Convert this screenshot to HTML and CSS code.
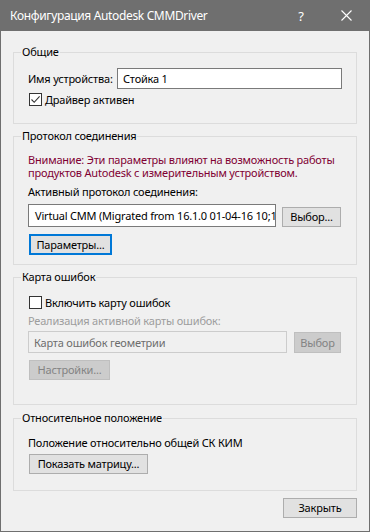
FILE: index.html
```html
<!DOCTYPE html>
<html lang="ru">
<head>
    <meta charset="UTF-8">
    <title>Конфигурация Autodesk CMMDriver</title>
    <link rel="stylesheet" href="styles.css">
</head>
<body>
    <div class="window">
        <div class="titlebar">
            <span class="title">Конфигурация Autodesk CMMDriver</span>
            <span class="help">?</span>
            <span class="close">
                <svg width="11" height="11" viewBox="0 0 11 11"><path d="M0.5 0.5 L10.5 10.5 M10.5 0.5 L0.5 10.5" stroke="#fff" stroke-width="1.1" fill="none"/></svg>
            </span>
        </div>

        <div class="dialog">
            <fieldset class="group group-general">
                <legend>Общие</legend>
                <div class="name-row">
                    <label for="device-name">Имя устройства:</label>
                    <input type="text" id="device-name" class="field name-field" value="Стойка 1">
                </div>
                <div class="check">
                    <span class="box">
                        <svg width="11" height="11" viewBox="0 0 11 11"><path d="M1.5 5.5 L4.2 8.3 L9.6 2.4" stroke="#333" stroke-width="1.1" fill="none"/></svg>
                    </span>
                    Драйвер активен
                </div>
            </fieldset>

            <fieldset class="group group-protocol">
                <legend>Протокол соединения</legend>
                <p class="warning">Внимание: Эти параметры влияют на возможность работы продуктов Autodesk с измерительным устройством.</p>
                <p class="caption">Активный протокол соединения:</p>
                <div class="pick-row">
                    <div class="field protocol-field">Virtual CMM (Migrated from 16.1.0 01-04-16 10;11</div>
                    <button class="btn pick-btn">Выбор...</button>
                </div>
                <button class="btn focused params-btn">Параметры...</button>
            </fieldset>

            <fieldset class="group group-errors">
                <legend>Карта ошибок</legend>
                <div class="check">
                    <span class="box"></span>
                    Включить карту ошибок
                </div>
                <p class="caption disabled-text">Реализация активной карты ошибок:</p>
                <div class="pick-row errors-row">
                    <div class="field disabled-field">Карта ошибок геометрии</div>
                    <button class="btn disabled small-pick">Выбор</button>
                </div>
                <button class="btn disabled settings-btn">Настройки...</button>
            </fieldset>

            <fieldset class="group group-position">
                <legend>Относительное положение</legend>
                <p class="caption">Положение относительно общей СК КИМ</p>
                <button class="btn matrix-btn">Показать матрицу...</button>
            </fieldset>

            <div class="footer">
                <button class="btn close-btn">Закрыть</button>
            </div>
        </div>
    </div>
</body>
</html>
```

FILE: styles.css
```css
:root {
    --dialog-bg: #f0f0f0;
    --frame: #6f6f6f;
    --group-line: #dcdcdc;
    --btn-bg: #e1e1e1;
    --btn-border: #adadad;
    --focus: #0078d7;
    --warning: #800033;
}

* {
    margin: 0;
    padding: 0;
    box-sizing: border-box;
}

body {
    font-family: "Noto Sans", "Open Sans", sans-serif;
    font-size: 11px;
    letter-spacing: -0.2px;
    color: #000;
    background: #fff;
}

.window {
    width: 370px;
    height: 532px;
    border: 1px solid var(--frame);
    border-top: none;
    background: var(--dialog-bg);
    display: flex;
    flex-direction: column;
}

.titlebar {
    height: 31px;
    background: var(--frame);
    color: #fff;
    display: flex;
    align-items: center;
    font-size: 12px;
    letter-spacing: -0.35px;
    padding-left: 9px;
}

.title {
    flex: 1;
}

.help {
    width: 14px;
    text-align: center;
    font-size: 13px;
    margin-right: 33px;
}

.close {
    display: flex;
    width: 11px;
    margin-right: 17px;
}

.dialog {
    padding: 13px 12px 0;
    display: flex;
    flex-direction: column;
}

.group {
    border: 1px solid var(--group-line);
    padding: 8px 14px 0;
    display: flex;
    flex-direction: column;
    align-items: flex-start;
}

.group legend {
    line-height: 16px;
    padding: 0 1px;
    margin-left: -7px;
}

.group-general { padding-bottom: 15px; }
.group-protocol { margin-top: 4px; padding-top: 9px; padding-bottom: 9px; }
.group-errors { margin-top: 4px; padding-top: 9px; padding-bottom: 24px; }
.group-position { margin-top: 5px; padding-top: 10px; padding-bottom: 16px; }

.name-row {
    display: flex;
    align-items: center;
    width: 100%;
    justify-content: space-between;
}

.field {
    font: inherit;
    letter-spacing: inherit;
    color: #000;
    background: #fff;
    border: 1px solid #7a7a7a;
    padding: 0 5px;
    height: 21px;
    display: flex;
    align-items: center;
    white-space: nowrap;
    overflow: hidden;
    outline: none;
}

.name-field {
    width: 225px;
}

.check {
    display: flex;
    align-items: center;
    height: 17px;
    margin-top: 2px;
    margin-left: 1px;
}

.box {
    width: 13px;
    height: 13px;
    border: 1px solid #333;
    background: #fff;
    margin-right: 3px;
    display: flex;
    align-items: center;
    justify-content: center;
}

.group-errors .check {
    margin-top: 0;
}

.warning {
    color: var(--warning);
    line-height: 13px;
}

.caption {
    line-height: 13px;
    margin-top: 6px;
}

.group-position .caption {
    margin-top: 0;
}

.disabled-text {
    color: #9d9d9d;
    margin-top: 3px;
}

.pick-row {
    display: flex;
    align-items: flex-end;
    justify-content: space-between;
    width: 100%;
    margin-top: 6px;
    padding-right: 1px;
}

.protocol-field {
    width: 248px;
    height: 23px;
    padding-left: 6px;
}

.errors-row {
    margin-top: 4px;
}

.disabled-field {
    width: 259px;
    height: 22px;
    background: var(--dialog-bg);
    border-color: #cccccc;
    color: #6d6d6d;
}

.btn {
    font: inherit;
    letter-spacing: inherit;
    color: #000;
    background: var(--btn-bg);
    border: 1px solid var(--btn-border);
    height: 20px;
    line-height: 16px;
    padding: 0 4px;
    text-align: center;
    white-space: nowrap;
    margin-left: 1px;
}

.pick-btn { width: 59px; }

.focused {
    border: 2px solid var(--focus);
}

.params-btn {
    width: 83px;
    height: 21px;
    margin-top: 7px;
}

.btn.disabled {
    background: #cccccc;
    border-color: #bfbfbf;
    color: #838383;
}

.small-pick {
    width: 47px;
    height: 21px;
}

.settings-btn {
    width: 81px;
    margin-top: 7px;
}

.matrix-btn {
    width: 119px;
    margin-top: 5px;
}

.footer {
    display: flex;
    justify-content: flex-end;
    margin-top: 7px;
}

.close-btn {
    width: 74px;
}
```
